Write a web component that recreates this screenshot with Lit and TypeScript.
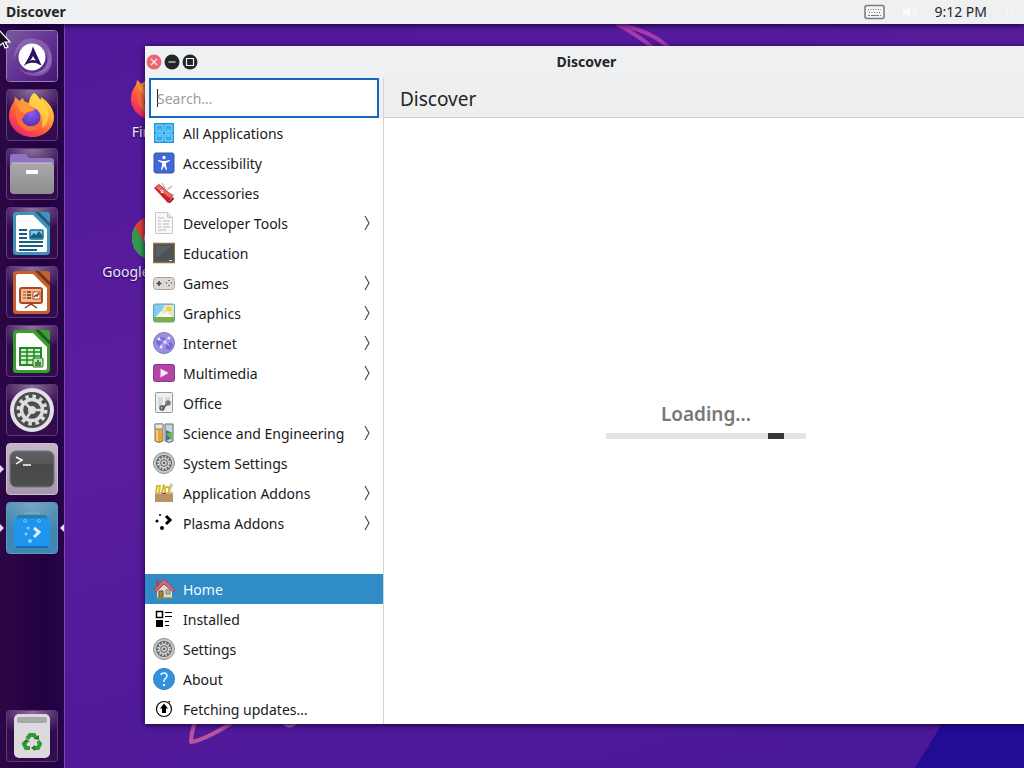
import { LitElement, html, css, svg, TemplateResult } from "lit";
import { customElement, state } from "lit/decorators.js";
import { classMap } from "lit/directives/class-map.js";

type Icon = TemplateResult;

const icon = (size: number, body: unknown, view = size): Icon =>
  html`<svg width=${size} height=${size} viewBox="0 0 ${view} ${view}" aria-hidden="true">${body}</svg>`;

const firefoxArt = svg`
  <defs>
    <linearGradient id="fx-body" x1="0.85" y1="0.05" x2="0.2" y2="0.95">
      <stop offset="0" stop-color="#ffe14d"/><stop offset="0.35" stop-color="#ffa436"/>
      <stop offset="0.65" stop-color="#ff5a3c"/><stop offset="1" stop-color="#e8266b"/>
    </linearGradient>
    <radialGradient id="fx-globe" cx="0.5" cy="0.3" r="0.7">
      <stop offset="0" stop-color="#9059ff"/><stop offset="1" stop-color="#5436a8"/>
    </radialGradient>
  </defs>
  <path d="M26 2c3 2 5 4 6 7 1-1 1-2 1-3 6 4 13 11 13 20 0 12-10 20-22 20S1 37 1 25c0-6 2-10 5-14l1-5c2 1 3 3 4 4l4-3 1 3c1 1 3 1 5 2 1-5 2-8 5-10z" fill="url(#fx-body)"/>
  <path d="M26 2c3 2 5 4 6 7 7 4 10 12 8 19-1 5-4 8-6 9 1-8 1-12-3-16-3-3-8-4-10-9 1-5 2-8 5-10z" fill="#ffd84a" opacity="0.7"/>
  <circle cx="23" cy="26" r="9.500" fill="url(#fx-globe)"/>
  <path d="M7 14c5-3 9-1 13 2l7 2c0 2-5 3-8 4-3 2-3 4-5 6 1 5 5 8 10 7 5 0 8-4 9-6 2 7-4 11-10 11-10 0-17-10-16-26z" fill="#ff6a3a"/>
  <path d="M8 13c5-2 9 0 12 3l7 2c-3 2-8 2-10 5-4-2-7-5-9-10z" fill="#ff9a35"/>`;

const libreDoc = (edge: string, dark: string, mark: unknown) => svg`
  <path d="M6 1h20l14 14v25a4 4 0 0 1-4 4H6a3 3 0 0 1-3-3V4a3 3 0 0 1 3-3z" fill=${edge}/>
  <path d="M27 1h11a3 3 0 0 1 2 3v10z" fill=${edge}/>
  <path d="M25 1l15 15V12L29 1z" fill=${dark}/>
  <path d="M8 4h15l14 14v21a2 2 0 0 1-2 2H8a2 2 0 0 1-2-2V6a2 2 0 0 1 2-2z" fill="#fffefd"/>${mark}`;

const writerArt = libreDoc("#3f93bd", "#245873", svg`
  <path d="M9 19h8M9 23h8M9 27h8M9 31h24M9 35h24M9 39h18" stroke="#14607f" stroke-width="2"/>
  <rect x="20" y="19" width="13" height="9" rx="1" fill="#85c5ee" stroke="#1b6d94" stroke-width="1.500"/>
  <path d="M21 27v-2l3-3 2 2 3-4 3 4v3z" fill="#14607f"/>`);

const impressArt = libreDoc("#c5602c", "#6d3520", svg`
  <rect x="10" y="18" width="22" height="15" rx="2" fill="#f5b894" stroke="#a84a20" stroke-width="2"/>
  <path d="M13 22h3M13 25h3M13 28h3" stroke="#a84a20" stroke-width="1"/>
  <path d="M17 22h4M17 25h4M17 28h4" stroke="#6b2c12" stroke-width="1.500"/>
  <rect x="23" y="22" width="7" height="7" fill="#fff" stroke="#a84a20"/>
  <path d="M24 27l2-2 1 1 2-3M15 38l6-4 6 4" fill="none" stroke="#8a3a18" stroke-width="1.500"/>`);

const calcArt = libreDoc("#3a9e2f", "#1f5a24", svg`
  <path d="M10 19h21v17H10z" fill="#d7efc9" stroke="#1d8a24" stroke-width="2"/>
  <path d="M17 19v17M24 19v17M10 23h21M10 27h21M10 31h21" stroke="#1d8a24" stroke-width="1.500"/>
  <rect x="23" y="29" width="10" height="9" rx="1" fill="#b7e3a2" stroke="#1d6a24"/>
  <path d="M26 37v-4M28 37v-6M30 37v-4" stroke="#1d6a24" stroke-width="1.500"/>`);

const gearArt = svg`
  <circle cx="24" cy="24" r="22" fill="#e5dfe9"/>
  <circle cx="24" cy="24" r="18" fill="#4c4d4f"/>
  <circle cx="24" cy="24" r="13.500" fill="none" stroke="#deddde" stroke-width="4" stroke-dasharray="3.500 3.569"/>
  <circle cx="24" cy="24" r="10.500" fill="none" stroke="#deddde" stroke-width="3.500"/>
  <circle cx="24" cy="24" r="4" fill="#deddde"/>
  <path d="M24 24l-7-7M24 24h10M24 24l-6 9" stroke="#deddde" stroke-width="2.500"/>`;

const sysGear = svg`
  <circle cx="11" cy="11" r="10.500" fill="#c9c9c9" stroke="#8f8f8f"/>
  <circle cx="11" cy="11" r="8" fill="#626466"/>
  <circle cx="11" cy="11" r="6" fill="none" stroke="#d2d2d2" stroke-width="2" stroke-dasharray="1.570 1.570"/>
  <circle cx="11" cy="11" r="4.500" fill="none" stroke="#d2d2d2" stroke-width="1.500"/>
  <circle cx="11" cy="11" r="2" fill="none" stroke="#d2d2d2" stroke-width="1.500"/>`;

const art = {
  launcher: icon(50, svg`
    <defs><linearGradient id="lg" x1="0" y1="0" x2="1" y2="1"><stop offset="0" stop-color="#7a5a9e"/><stop offset="0.5" stop-color="#633493"/><stop offset="1" stop-color="#471777"/></linearGradient></defs>
    <rect width="52" height="52" fill="url(#lg)"/>
    <path d="M7 30C7 14 18 5 29 8c12 2 20 12 17 24-3 10-11 14-18 12 11-2 16-10 13-19C38 15 27 11 18 16 10 20 8 27 7 30z" fill="#b596d3" opacity="0.4"/>
    <path d="M12 38c7 7 17 7 25 2 7-6 8-16 4-23 8 10 8 22-2 28-9 4-21 2-27-7z" fill="#a680ca" opacity="0.5"/>
    <circle cx="26" cy="27" r="14" fill="#fff"/>
    <path d="M27 16l9 20c-3-1-5-3-8-3s-7 0-11 4c4-7 8-13 10-21zm0 10c-1 3-2 4-4 5 3-1 5-1 7 0-1-2-2-3-3-5z" fill="#2a155e"/>`, 52),
  firefox: icon(48, firefoxArt),
  files: icon(48, svg`
    <defs><linearGradient id="fl" x1="0" y1="0" x2="0" y2="1"><stop offset="0" stop-color="#aaa8a9"/><stop offset="1" stop-color="#8f8e8e"/></linearGradient></defs>
    <path d="M4 4h14l3 4h22a3 3 0 0 1 3 3v9H2V7a3 3 0 0 1 2-3z" fill="#8e75c4"/>
    <rect x="2" y="13" width="44" height="31" rx="4" fill="url(#fl)"/>
    <path d="M4 13h40" stroke="#c9c6cb"/><rect x="18" y="20" width="12" height="4" rx="1" fill="#fff"/>`),
  writer: icon(44, writerArt),
  impress: icon(44, impressArt),
  calc: icon(44, calcArt),
  settings: icon(48, gearArt),
  terminal: icon(48, svg`
    <defs><linearGradient id="tm" x1="0" y1="0" x2="0" y2="1"><stop offset="0" stop-color="#626263"/><stop offset="0.35" stop-color="#555556"/><stop offset="0.36" stop-color="#474849"/><stop offset="1" stop-color="#4e4f50"/></linearGradient></defs>
    <rect x="2" y="6" width="44" height="36" rx="6" fill="url(#tm)" stroke="#767477"/>
    <path d="M8 12l6 3-6 4" fill="none" stroke="#fff" stroke-width="1.500"/><path d="M15 20h8" stroke="#fff" stroke-width="1.500"/>`),
  discover: icon(48, svg`
    <path d="M17 15V9h14v6" fill="none" stroke="#6db4dd" stroke-width="1"/>
    <path d="M10 11h28l2 4H8z" fill="#347aa4"/>
    <path d="M6 14h36v29H6z" fill="#2194ed"/><path d="M8 42h32v2H8z" fill="#176cba"/>
    <circle cx="17" cy="17" r="1.500" fill="none" stroke="#5cc9ff"/><circle cx="31" cy="17" r="1.500" fill="none" stroke="#5cc9ff"/>
    <circle cx="20" cy="24" r="1.500" fill="#7ed3ff"/><circle cx="18" cy="30" r="1.500" fill="#7ed3ff"/><circle cx="22" cy="37" r="2" fill="#7ed3ff"/>
    <path d="M26 24l5 4-5 5" fill="none" stroke="#d6f1ff" stroke-width="3"/>`),
  trash: icon(48, svg`
    <rect x="6" y="2" width="36" height="44" rx="5" fill="#dcdadd"/>
    <rect x="9" y="5" width="30" height="6" rx="2" fill="#a9a7aa"/>
    <g fill="none" stroke="#2e9a34" stroke-width="4">
      <path d="M19 27l3-4h4l2 3"/><path d="M30 29l2 3-2 4h-3"/><path d="M22 36h-4l-2-4 2-2"/></g>
    <path d="M26 27l5 1 0-5zM27 33v6l-4-3zM15 31l3-4 4 3z" fill="#23762a"/>`),
  chrome: icon(48, svg`
    <circle cx="24" cy="24" r="22" fill="#fbc116"/>
    <path d="M24 24L5 13a22 22 0 0 0 17 33l10-17z" fill="#2e9a4c"/>
    <path d="M5 13a22 22 0 0 1 38 0H24l-9 16z" fill="#e33b2e"/>
    <circle cx="24" cy="24" r="10" fill="#fff"/><circle cx="24" cy="24" r="8" fill="#4285f4"/>`),
  keyboard: html`<svg width="22" height="16" viewBox="0 0 22 16" aria-hidden="true">
    <rect x="1" y="1.500" width="19" height="13" rx="2" fill="#f4f4f4" stroke="#77797b" stroke-width="1.500"/>
    <path d="M4 5.500h13M5 8.500h12" stroke="#77797b" stroke-dasharray="1 1.500"/><path d="M4 11.500h2M7 11.500h8M16 11.500h1" stroke="#77797b"/></svg>`,
  sound: html`<svg width="18" height="16" viewBox="0 0 18 16" aria-hidden="true">
    <path d="M2 5h3l4-3v12l-4-3H2z" fill="#fafafa"/><path d="M11 5q3 3 0 6M14 4q3 4 0 8" fill="none" stroke="#f6f7f7" stroke-width="1.500"/></svg>`,
  session: html`<svg width="16" height="16" viewBox="0 0 16 16" aria-hidden="true">
    <path d="M5 3v9M12 3q-3 3-1 9" fill="none" stroke="#f6f6f6" stroke-width="2"/></svg>`,
};

const cat = {
  all: icon(22, svg`<rect x="1" y="1" width="20" height="20" fill="#2492e0"/>
    <path d="M3 3h7v7H3zM12 3h7v7h-7zM3 12h7v7H3zM12 12h7v7h-7z" fill="#33abee" stroke="#8be0fa"/>
    <path d="M5 8h3M14 8h3M5 14h3M14 14h3" stroke="#8be0fa"/>`),
  access: icon(22, svg`<rect x="1" y="1" width="20" height="20" rx="2" fill="#4068d4" stroke="#3455b0"/>
    <circle cx="11" cy="5.500" r="1.700" fill="#fff"/><path d="M5 8l5 1h2l5-1v1l-4 2v2l1 5h-1l-2-4-2 4H8l1-5v-2L5 9z" fill="#fff"/>`),
  accessories: icon(22, svg`<path d="M6 4l5 4M9 1l3 6M14 8l5-4M17 12l4 1" stroke="#b9bcbc" stroke-width="1.500"/>
    <path d="M1 6l5-4 14 12-5 7z" fill="#c62226"/><path d="M3 6l3-3 13 11-2 2z" fill="#ed6a6c"/>
    <path d="M15 21l5-6 1 2-4 4z" fill="#8b1317"/><path d="M7 8l3 3M8 11l2-3" stroke="#fff"/>`),
  developer: icon(22, svg`<path d="M2.500 0.500h12l5 5v16h-17z" fill="#f8f8fa" stroke="#c6c6ca"/>
    <path d="M14.500 0.500v5h5" fill="#e4e4e8" stroke="#c6c6ca"/>
    <path d="M5 6h6M5 9h3M10 9h7M5 12h3M10 12h6M5 15h3M10 15h7M5 18h8" stroke="#b4b4bc"/>`),
  education: icon(22, svg`<rect x="0.500" y="1.500" width="21" height="19" fill="#4c5256" stroke="#8d7344" stroke-width="1.500"/>
    <path d="M3 4h16L3 16z" fill="#596166"/><path d="M16 18.500h3" stroke="#ddd"/>`),
  games: icon(22, svg`<rect x="0.500" y="5.500" width="21" height="12" rx="3" fill="#dddad5" stroke="#aaa7a2"/>
    <path d="M6 9v5M3.500 11.500h5" stroke="#444" stroke-width="1.500"/><path d="M16 8v1M16 13v1M13 11h1M18 11h1" stroke="#555" stroke-width="1.500"/>`),
  graphics: icon(22, svg`<rect x="0.500" y="2" width="21" height="18" rx="2" fill="#7fcdf0" stroke="#5b9fb8"/>
    <path d="M11 3h10v13H6z" fill="#e6e8b4"/><circle cx="16" cy="7" r="2.500" fill="#ffc34d"/>
    <path d="M3 15l5-6 3 3 3-2 5 5z" fill="#f6fafa"/><path d="M1 15h20v3q0 2-2 2H3q-2 0-2-2z" fill="#7cb043"/>`),
  internet: icon(22, svg`<circle cx="11" cy="11" r="10.500" fill="#9a8fe6" stroke="#7c78a8"/>
    <path d="M3 9l5-4 4 1-1 4-4 2-1 4zM13 13l5-3 2 3-3 5-4-1z" fill="#7c66d0"/>
    <path d="M5 7l7 3 4-5M7 15l5-5 5 4" fill="none" stroke="#c4bdf6"/>
    <circle cx="6" cy="7" r="1.500" fill="#e9e6ff"/><circle cx="12" cy="10" r="1.500" fill="#e9e6ff"/><circle cx="16" cy="6" r="1.500" fill="#e9e6ff"/><circle cx="8" cy="15" r="1.500" fill="#e9e6ff"/>`),
  multimedia: icon(22, svg`<rect x="0.500" y="2.500" width="21" height="17" rx="2" fill="#b544a8" stroke="#8b3a86"/>
    <path d="M7.500 6.500l8 4.500-8 4.500z" fill="#fbe6f8"/>`),
  office: icon(22, svg`<rect x="2.500" y="0.500" width="17" height="20" rx="1" fill="#f0f0f0" stroke="#999"/>
    <path d="M5 5h5v10H5zM12 5h5v4h-5z" fill="#d9d9d9"/>
    <path d="M9 17l7-7" stroke="#666" stroke-width="2"/><circle cx="9" cy="16" r="2" fill="none" stroke="#555" stroke-width="1.500"/><circle cx="15" cy="11" r="2" fill="none" stroke="#777" stroke-width="1.500"/>`),
  science: icon(22, svg`<path d="M2 2h8v17q-4 3-8 0z" fill="#dfa63f" stroke="#967a4a"/><path d="M2 2h8v5H2z" fill="#e8e6df" stroke="#888"/>
    <path d="M12 2h8v17q-4 3-8 0z" fill="#c9d5de" stroke="#5c6c74"/><path d="M13 8l6 3v5l-6 3z" fill="#3d6fa9"/><path d="M13 12l6 6v-8z" fill="#7ab23b"/>
    <path d="M4 8v11" stroke="#fff3cf"/>`),
  gear: icon(22, sysGear),
  addons: icon(22, svg`<path d="M3 10l1-6h3l-1 6M9 10l2-8M12 10V5h4v5M16 9l3-7" fill="none" stroke="#d5be32" stroke-width="2"/>
    <path d="M17 2l2 1-2 6" fill="none" stroke="#c9c9c9" stroke-width="1.500"/>
    <path d="M2 10h18v10H2z" fill="#bb9263"/><path d="M2 10h18v2H2z" fill="#d6b482"/><path d="M9 11h4v1H9z" fill="#775634"/>`),
  plasma: icon(22, svg`<circle cx="7" cy="3" r="1"/><circle cx="4" cy="9" r="1.500"/><circle cx="9" cy="16" r="2"/>
    <path d="M13 4l4 4-4 4" fill="none" stroke="#000" stroke-width="3"/>`),
  home: icon(22, svg`<path d="M4 11l7-7 8 7v9H4z" fill="#e3dac8"/><path d="M3 2h3v6H3z" fill="#a64c54"/>
    <path d="M11 1l11 11-2 2-9-8-8 8-2-2z" fill="#cf6a7c" stroke="#9a4a5c"/>
    <path d="M6 13h4v7H6z" fill="#a8803e" stroke="#6e5330"/><path d="M13 12h4v4h-4z" fill="#9fc4d8" stroke="#7a7a70"/><path d="M3 20h17" stroke="#7a9a4a" stroke-width="1.500"/>`),
  installed: icon(22, svg`<rect x="3.500" y="3.500" width="6" height="6" fill="none" stroke="#000" stroke-width="1.500"/>
    <path d="M3 12h7v7H3zM12 4h7v1h-7zM12 8h7v1h-7zM12 13h4v1h-4zM12 17h4v1h-4z"/>`),
  about: icon(22, svg`<circle cx="11" cy="11" r="10.500" fill="#3093dc" stroke="#2b7fc0"/>
    <path d="M8 7q0-2 3-2t3 3q0 1-2 3-1 1-1 3" fill="none" stroke="#e9f6ff" stroke-width="1.500"/><path d="M10 16h2v2h-2z" fill="#e9f6ff"/>`),
  fetching: icon(22, svg`<circle cx="11" cy="11" r="7.500" fill="none" stroke="#000" stroke-width="1.200"/>
    <path d="M11 5.500l4 5H13V15H9v-4.500H7zM15 3h2v2z"/>`),
};

interface Row { label: string; icon: Icon; children?: boolean }

const categories: Row[] = [
  { label: "All Applications", icon: cat.all },
  { label: "Accessibility", icon: cat.access },
  { label: "Accessories", icon: cat.accessories },
  { label: "Developer Tools", icon: cat.developer, children: true },
  { label: "Education", icon: cat.education },
  { label: "Games", icon: cat.games, children: true },
  { label: "Graphics", icon: cat.graphics, children: true },
  { label: "Internet", icon: cat.internet, children: true },
  { label: "Multimedia", icon: cat.multimedia, children: true },
  { label: "Office", icon: cat.office },
  { label: "Science and Engineering", icon: cat.science, children: true },
  { label: "System Settings", icon: cat.gear },
  { label: "Application Addons", icon: cat.addons, children: true },
  { label: "Plasma Addons", icon: cat.plasma, children: true },
];

const pages: Row[] = [
  { label: "Home", icon: cat.home },
  { label: "Installed", icon: cat.installed },
  { label: "Settings", icon: cat.gear },
  { label: "About", icon: cat.about },
  { label: "Fetching updates…", icon: cat.fetching },
];

const base = css`
  * { box-sizing: border-box; }
  button, input { font: inherit; color: inherit; }
  button { border: 0; padding: 0; background: none; text-align: left; cursor: default; }
  svg { display: block; flex: none; }
`;

@customElement("desktop-dock")
export class DesktopDock extends LitElement {
  static styles = [base, css`
    :host {
      display: flex; flex-direction: column; gap: 7px; padding: 6px 0;
      background: linear-gradient(90deg, #2b0746, #230040 70%, #27044a);
      border-right: 1px solid #7c4aa8;
    }
    .slot { display: grid; grid-template-columns: 6px 52px 6px; align-items: center; }
    .slot.last { margin-top: auto; }
    .tile {
      grid-column: 2; width: 52px; height: 52px; border-radius: 4px; overflow: hidden;
      display: grid; place-items: center; border: 1px solid #5f3a7c;
      background: radial-gradient(ellipse 75% 50% at 50% 0, #8d7399, #4c2566 70%, #310d4e);
    }
    .launcher { border-color: #9a7fc0; }
    .terminal { background: linear-gradient(#c3b6c9, #a596aa); border-color: #cdc0d2; }
    .discover { background: radial-gradient(ellipse 80% 60% at 50% 0, #7ba6bf, #4186b0); border-color: #5d9abf; }
    .mark { width: 4px; height: 8px; background: #e6d9f0; }
    .left { grid-column: 1; clip-path: polygon(0 0, 100% 50%, 0 100%); }
    .right { grid-column: 3; justify-self: end; clip-path: polygon(100% 0, 0 50%, 100% 100%); }
  `];

  render() {
    const apps: [string, string, Icon][] = [
      ["launcher", "Applications", art.launcher], ["firefox", "Firefox", art.firefox],
      ["files", "Files", art.files], ["writer", "Writer", art.writer],
      ["impress", "Impress", art.impress], ["calc", "Calc", art.calc],
      ["settings", "System Settings", art.settings], ["terminal", "Terminal", art.terminal],
      ["discover", "Discover", art.discover], ["trash", "Trash", art.trash],
    ];
    return apps.map(([id, name, picture]) => html`
      <div class="slot ${id === "trash" ? "last" : ""}">
        ${id === "terminal" || id === "discover" ? html`<span class="mark left"></span>` : ""}
        <button class="tile ${id}" aria-label=${name}>${picture}</button>
        ${id === "discover" ? html`<span class="mark right"></span>` : ""}
      </div>`);
  }
}

@customElement("discover-window")
export class DiscoverWindow extends LitElement {
  @state() private current = "Home";

  static styles = [base, css`
    :host { display: flex; flex-direction: column; background: #fff; color: #17191b; }
    .titlebar {
      display: grid; grid-template-columns: 1fr auto 1fr; align-items: center;
      height: 32px; padding: 0 1px; background: #eff0f1;
    }
    .controls { display: flex; gap: 2px; }
    .title { margin: 0; font-size: 14px; line-height: 20px; font-weight: 700; color: #232629; }
    .body { flex: 1; min-height: 0; display: grid; grid-template-columns: 239px 1fr; }
    .side { display: flex; flex-direction: column; min-height: 0; border-right: 1px solid #d3d4d5; }
    .search { height: 40px; padding: 0 4px; background: #efeff0; }
    .search input {
      display: block; width: 100%; height: 40px; padding: 0 6px; border: 2px solid #1766c0; outline: 0;
      font-size: 14px; background: linear-gradient(#222, #222) 6px 50% / 1px 18px no-repeat #fff;
    }
    .search input::placeholder { color: #9c9d9e; opacity: 1; }
    .list { display: flex; flex-direction: column; }
    .list.pages { margin-top: auto; }
    .row {
      display: flex; align-items: center; gap: 8px; height: 30px; padding: 0 12px 0 8px;
      font-size: 14px; line-height: 20px;
    }
    .label { flex: 1; padding-top: 2px; white-space: nowrap; }
    .row.active { background: #308cc6; color: #f4f9fd; }
    .main { display: flex; flex-direction: column; min-width: 0; }
    .heading {
      height: 40px; margin: 0; padding: 0 16px; border-bottom: 1px solid #cfd0d0; background: #eeeeee;
      font-size: 19px; line-height: 42px; font-weight: 400; color: #232629;
    }
    .content { flex: 1; display: flex; flex-direction: column; align-items: center; justify-content: center; gap: 8px; }
    .loading { margin: 0; font-size: 19px; line-height: 22px; font-weight: 600; color: #77787a; }
    progress { display: block; width: 200px; height: 6px; appearance: none; border: 0; background: #e4e4e4; }
    progress::-webkit-progress-bar {
      background: linear-gradient(#353637, #353637) 88% 0 / 16px 6px no-repeat #e4e4e4;
    }
  `];

  private row(r: Row) {
    return html`<button class=${classMap({ row: true, active: r.label === this.current })}
      @click=${() => (this.current = r.label)}>
      ${r.icon}<span class="label">${r.label}</span>
      ${r.children ? html`<svg width="8" height="16" viewBox="0 0 8 16" aria-hidden="true">
        <path d="M2 1l4 7-4 7" fill="none" stroke="#4a4c4e" stroke-width="1.200"/></svg>` : ""}
    </button>`;
  }

  render() {
    return html`
      <header class="titlebar">
        <div class="controls">
          <button aria-label="Close">${icon(16, svg`<circle cx="8" cy="8" r="7.500" fill="#ed6573"/><path d="M5 5l6 6M11 5l-6 6" stroke="#fde9eb" stroke-width="1.200"/>`)}</button>
          <button aria-label="Minimize">${icon(16, svg`<circle cx="8" cy="8" r="7.500" fill="#232629"/><path d="M4.500 8h7" stroke="#b9babb" stroke-width="1.500"/>`)}</button>
          <button aria-label="Maximize">${icon(16, svg`<circle cx="8" cy="8" r="7.500" fill="#232629"/><path d="M4.500 4.500h7v7h-7z" fill="none" stroke="#f4f4f4" stroke-width="1.200"/>`)}</button>
        </div>
        <h1 class="title">Discover</h1>
      </header>
      <div class="body">
        <aside class="side">
          <div class="search">
            <input type="text" aria-label="Search" placeholder="Search…" />
          </div>
          <nav class="list" aria-label="Categories">${categories.map((r) => this.row(r))}</nav>
          <nav class="list pages" aria-label="Pages">${pages.map((r) => this.row(r))}</nav>
        </aside>
        <main class="main">
          <h2 class="heading">Discover</h2>
          <div class="content">
            <p class="loading" id="status">Loading...</p>
            <progress aria-labelledby="status"></progress>
          </div>
        </main>
      </div>`;
  }
}

@customElement("app-root")
export class AppRoot extends LitElement {
  static styles = [base, css`
    :host {
      display: grid; grid-template: 24px 1fr / 65px 1fr; height: 100vh; overflow: hidden; position: relative;
      font-family: "Noto Sans", "Open Sans", sans-serif; background: #4d189a;
    }
    .panel {
      grid-column: 1 / -1; z-index: 1; display: flex; align-items: center; gap: 15px; padding: 0 6px;
      background: #eff0f1; color: #232629; font-size: 14px; line-height: 20px; box-shadow: 0 1px 6px #12002c;
    }
    .app { margin-right: auto; font-weight: 700; }
    .desktop { position: relative; overflow: hidden; background: linear-gradient(165deg, #50189a, #5b1d9d 40%, #531a9b 65%, #471899); }
    .wallpaper { position: absolute; inset: 0; width: 100%; height: 100%; }
    .shortcut {
      position: absolute; left: 29px; width: 120px; display: flex; flex-direction: column; align-items: center;
      font-size: 14px; line-height: 20px; color: #eee4f6; text-shadow: 0 1px 2px #1a0040;
    }
    .ff { top: 50px; }
    .gc { top: 190px; }
    .window { position: absolute; inset: 22px -4px 44px 80px; box-shadow: 0 1px 6px #16003a; }
    .cursor { position: absolute; left: 0; top: 30px; z-index: 2; }
  `];

  render() {
    return html`
      <header class="panel">
        <span class="app">Discover</span>
        ${art.keyboard}${art.sound}<time>9:12 PM</time>${art.session}
      </header>
      <desktop-dock></desktop-dock>
      <div class="desktop">
        <svg class="wallpaper" viewBox="0 0 959 744" preserveAspectRatio="none" aria-hidden="true">
          <path d="M877 700L850 744H959V700z" fill="#210c96"/>
          <path d="M552 0Q574 12 588 24M554 0Q588 8 604 24" fill="none" stroke="#a93bb0" stroke-width="4"/>
          <path d="M130 698Q126 710 126 718Q140 716 168 698" fill="none" stroke="#bb539f" stroke-width="4" stroke-linejoin="round"/>
          <path d="M219 699q5 6 12 0" fill="none" stroke="#9470ae" stroke-width="3"/>
        </svg>
        <button class="shortcut ff">${art.firefox}<span>Firefox</span></button>
        <button class="shortcut gc">${art.chrome}<span>Google Chrome</span></button>
        <discover-window class="window"></discover-window>
      </div>
      <svg class="cursor" width="12" height="20" viewBox="0 0 12 20" aria-hidden="true">
        <path d="M-3-2L10 12H5l3 5-3 1-2-5-4 3z" fill="#17111d" stroke="#fff" stroke-width="1.200"/>
      </svg>`;
  }
}
